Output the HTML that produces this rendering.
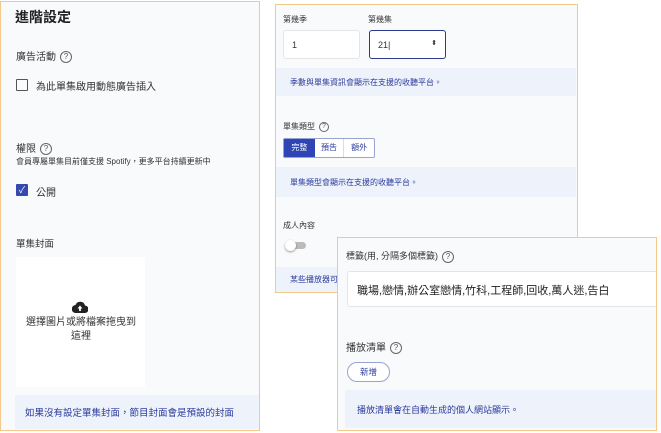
<!DOCTYPE html>
<html><head><meta charset="utf-8"><style>
*{box-sizing:border-box;margin:0;padding:0}
body{width:661px;height:433px;background:#fff;position:relative;overflow:hidden;font-family:"Liberation Sans","Noto Sans CJK TC",sans-serif;color:#333}
.p{position:absolute;background:#f9fafb;border:1.5px solid #f3c98b;overflow:hidden}
.a{position:absolute;white-space:nowrap}
.q{display:inline-block;width:12px;height:12px;border:1px solid #666;border-radius:50%;font-size:8px;text-align:center;line-height:10px;margin-left:4px;vertical-align:middle;color:#555}
.info{position:absolute;background:#eef3fb;color:#2b3a9c}
</style></head><body>
<div class="p" style="left:0;top:1px;width:260px;height:430px">
 <div class="a" style="left:14px;top:5px;font-size:14px;font-weight:bold;color:#222">進階設定</div>
 <div class="a" style="left:15px;top:46px;font-size:10px">廣告活動<span class="q">?</span></div>
 <div class="a" style="left:15px;top:77px;width:12px;height:12px;border:1.5px solid #555;border-radius:1px"></div>
 <div class="a" style="left:35px;top:76px;font-size:10px">為此單集啟用動態廣告插入</div>
 <div class="a" style="left:15px;top:138px;font-size:10px">權限<span class="q">?</span></div>
 <div class="a" style="left:15px;top:154px;font-size:8px">會員專屬單集目前僅支援 Spotify，更多平台持續更新中</div>
 <div class="a" style="left:15px;top:182px;width:12px;height:12px;background:#3548b0;border-radius:1px;color:#fff;font-size:9px;text-align:center;line-height:12px">✓</div>
 <div class="a" style="left:35px;top:182px;font-size:10px">公開</div>
 <div class="a" style="left:15px;top:234px;font-size:9.5px">單集封面</div>
 <div class="a" style="left:15px;top:255px;width:129px;height:130px;background:#fff"></div>
 <svg class="a" style="left:71px;top:299px" width="16" height="12" viewBox="0 0 16 12"><path d="M4 12a4 4 0 0 1-.5-8A5 5 0 0 1 13 4.5 3.7 3.7 0 0 1 12.5 12Z" fill="#222"/><path d="M8 4.5 5.5 7.5h1.6V10h1.8V7.5h1.6Z" fill="#fff"/></svg>
 <div class="a" style="left:22px;top:314px;font-size:10px;width:116px;text-align:center;white-space:normal;line-height:14px;word-break:break-all">選擇圖片或將檔案拖曳到這裡</div>
 <div class="info" style="left:14px;top:393px;width:244px;height:34px;font-size:9.5px;padding:10px 10px">如果沒有設定單集封面，節目封面會是預設的封面</div>
</div>
<div class="p" style="left:275px;top:4px;width:303px;height:289px">
 <div class="a" style="left:7px;top:9px;font-size:8px">第幾季</div>
 <div class="a" style="left:92px;top:9px;font-size:8px">第幾集</div>
 <div class="a" style="left:7px;top:25px;width:77px;height:29px;background:#fff;border:1px solid #e5e5e5;border-radius:3px;font-size:9px;padding:9px 8px">1</div>
 <div class="a" style="left:93px;top:25px;width:77px;height:29px;background:#fff;border:1px solid #2b3a8c;border-radius:3px;font-size:9px;padding:9px 8px">21|<span style="position:absolute;right:8px;top:8px;font-size:7px">⬍</span></div>
 <div class="info" style="left:0;top:63px;width:300px;height:28px;font-size:8px;padding:9px 14px">季數與單集資訊會顯示在支援的收聽平台。</div>
 <div class="a" style="left:7px;top:116px;font-size:8px">單集類型<span class="q" style="width:10px;height:10px;line-height:8px;font-size:7px">?</span></div>
 <div class="a" style="left:7px;top:133px;width:92px;height:20px;border:1px solid #9aa3d0;border-radius:2px;background:#fff;font-size:8px;display:flex">
  <div style="width:31px;background:#2f45b5;color:#fff;text-align:center;line-height:18px">完整</div>
  <div style="width:30px;color:#2b3a9c;text-align:center;line-height:18px;border-right:1px solid #ddd">預告</div>
  <div style="width:30px;color:#2b3a9c;text-align:center;line-height:18px">額外</div>
 </div>
 <div class="info" style="left:0;top:162px;width:300px;height:30px;font-size:8px;padding:10px 14px">單集類型會顯示在支援的收聽平台。</div>
 <div class="a" style="left:7px;top:215px;font-size:8px">成人內容</div>
 <div class="a" style="left:12px;top:237px;width:18px;height:7px;background:#bbb;border-radius:4px"></div>
 <div class="a" style="left:9px;top:235px;width:11px;height:11px;background:#fff;border-radius:50%;box-shadow:0 1px 2px rgba(0,0,0,.4)"></div>
 <div class="info" style="left:0;top:262px;width:300px;height:25px;font-size:8px;padding:7px 14px">某些播放器可</div>
</div>
<div class="p" style="left:337px;top:237px;width:320px;height:194px">
 <div class="a" style="left:8px;top:11px;font-size:9px">標籤(用, 分隔多個標籤)<span class="q">?</span></div>
 <div class="a" style="left:9px;top:33px;width:320px;height:36px;background:#fff;border:1px solid #e5e5e5;border-radius:3px;font-size:11px;padding:10px 9px;color:#222">職場,戀情,辦公室戀情,竹科,工程師,回收,萬人迷,告白</div>
 <div class="a" style="left:8px;top:101px;font-size:10px">播放清單<span class="q">?</span></div>
 <div class="a" style="left:9px;top:124px;width:43px;height:20px;border:1px solid #9aa3d0;border-radius:10px;background:#fff;font-size:8.5px;color:#2b3a9c;text-align:center;line-height:18px">新增</div>
 <div class="info" style="left:7px;top:152px;width:312px;height:38px;font-size:9px;padding:13px 12px">播放清單會在自動生成的個人網站顯示。</div>
</div>
</body></html>
